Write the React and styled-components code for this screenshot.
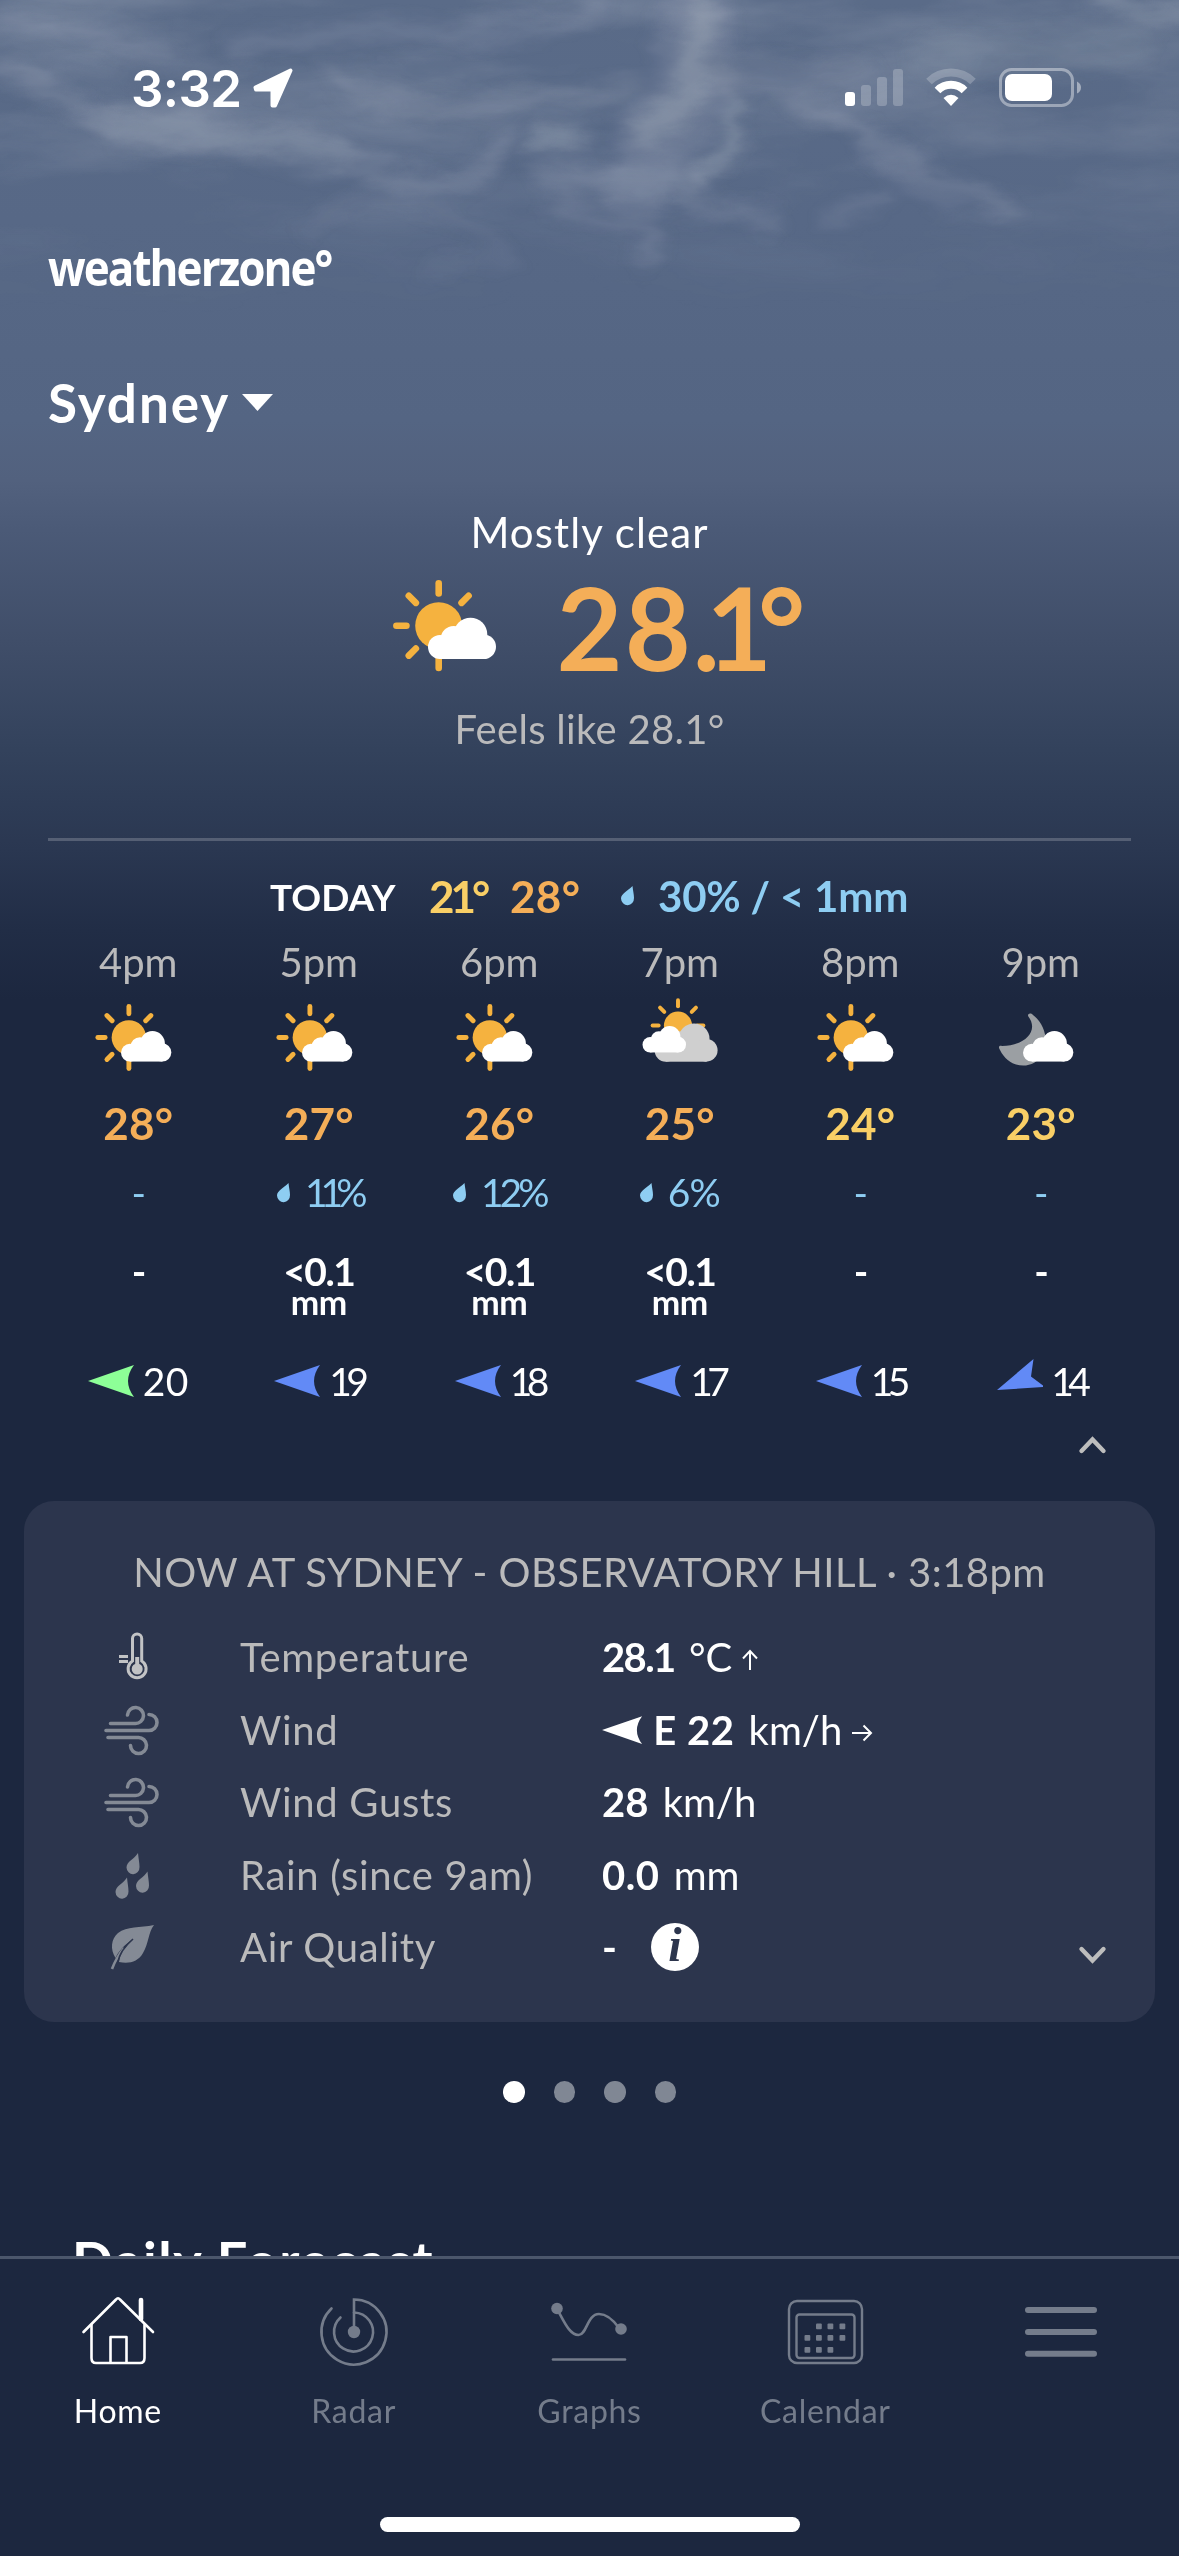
import React from "react"
import styled, { createGlobalStyle } from "styled-components"

const GlobalStyle = createGlobalStyle`
  * {
    box-sizing: border-box;
  }

  body {
    margin: 0;
    background: #1c273f;
    font-family: Lato, "Open Sans", sans-serif;
    color: #fff;
  }

  svg {
    display: block;
    flex: none;
    overflow: visible;
  }
`

const orange = "#f4ae58"
const yellow = "#f9cf66"
const rainBlue = "#8ecdf2"
const muted = "#bababb"
const inactive = "#747c8b"

const hours = [
  { time: "4pm", icon: "sun", temp: 28, color: orange, wind: "20", windColor: "#8dff97" },
  { time: "5pm", icon: "sun", temp: 27, color: orange, chance: "11%", wind: "19" },
  { time: "6pm", icon: "sun", temp: 26, color: orange, chance: "12%", wind: "18" },
  { time: "7pm", icon: "cloudy", temp: 25, color: orange, chance: "6%", wind: "17" },
  { time: "8pm", icon: "sun", temp: 24, color: yellow, wind: "15" },
  { time: "9pm", icon: "moon", temp: 23, color: yellow, wind: "14", tilted: true },
]

// Lato figures are all one width, so pull the text in round every "1"
const tighten = (text, amount) => -amount * (text.split("1").length - 1)

/* ---------- layout ---------- */

const Phone = styled.div`
  position: relative;
  width: 1179px;
  height: 2556px;
  overflow: hidden;
  background: linear-gradient(
    #5a6b88 0,
    #576886 220px,
    #546583 420px,
    #52617e 480px,
    #4b5a77 530px,
    #404e69 640px,
    #33425c 750px,
    #2a3751 850px,
    #212d46 930px,
    #1c273f 1000px
  );
`

const Sky = styled.svg`
  position: absolute;
  top: 0;
  left: 0;
`

const Screen = styled.main`
  position: relative;
  height: 2256px;
  overflow: hidden;
`

const StatusBar = styled.div`
  display: flex;
  align-items: center;
  height: 176px;
  padding: 0 98px 0 131px;
  font: 600 51px Inter, sans-serif;
`

const Clock = styled.span`
  letter-spacing: -0.6px;
  margin-right: 11px;
`

const StatusIcons = styled.div`
  display: flex;
  align-items: center;
  gap: 23px;
  margin-left: auto;
`

const Logo = styled.div`
  height: 186px;
  margin-left: 48px;
  font: 700 50px/182px "Open Sans", sans-serif;
  letter-spacing: -2.2px;
  transform: scaleX(0.88);
  transform-origin: left;
`

const Place = styled.div`
  display: flex;
  align-items: center;
  gap: 12px;
  height: 82px;
  padding: 0 0 2px 48px;
  font-size: 53px;
  font-weight: 700;
  letter-spacing: 2px;
`

const Current = styled.section`
  display: flex;
  flex-direction: column;
  align-items: center;
  margin: 58px 48px 0;
  padding-bottom: 79px;
  border-bottom: 3px solid rgba(255, 255, 255, 0.2);
`

const Condition = styled.div`
  height: 60px;
  line-height: 60px;
  font-size: 42px;
  letter-spacing: 1.1px;
`

const CurrentTemp = styled.div`
  display: flex;
  align-items: center;
  gap: 60px;
  height: 133px;
  padding: 0 0 5px 20px;
  color: ${orange};
  font-size: 114px;
  font-weight: 700;
  letter-spacing: 2px;
`

const Fraction = styled.span`
  letter-spacing: -14px;
`

const FeelsLike = styled.div`
  height: 60px;
  margin-top: 4px;
  line-height: 60px;
  font-size: 40px;
  letter-spacing: 0.3px;
  color: ${muted};
`

const Today = styled.div`
  display: flex;
  align-items: center;
  height: 84px;
  margin-top: 14px;
  padding: 0 0 2px 270px;
  font-size: 44px;
  font-weight: 700;
`

const TodayLabel = styled.span`
  width: 159px;
  font-size: 37px;
`

const TodayTemp = styled.span`
  width: ${(p) => p.$width}px;
  color: ${(p) => p.$color};
  letter-spacing: ${(p) => p.$spacing}px;
`

const TodayRain = styled.span`
  margin-left: 24px;
  font-size: 42px;
  color: ${rainBlue};
  letter-spacing: -0.2px;
`

const Hours = styled.section`
  display: grid;
  grid-template-columns: repeat(6, 1fr);
  padding: 0 48px;
`

const Hour = styled.div`
  display: flex;
  flex-direction: column;
`

const Cell = styled.div`
  display: flex;
  align-items: center;
  justify-content: center;
  gap: ${(p) => p.$gap || 0}px;
  height: ${(p) => p.$height}px;
  padding-bottom: 2px;
  color: ${(p) => p.$color || "#fff"};
  font-size: ${(p) => p.$size || 39}px;
  font-weight: ${(p) => p.$weight || 400};
  letter-spacing: ${(p) => p.$spacing || 0}px;
`

const Amount = styled.div`
  display: flex;
  flex-direction: column;
  align-items: center;
  height: 104px;
  padding-top: 23px;
  font-size: 39px;
  line-height: 44px;
  font-weight: 700;
  letter-spacing: -1.5px;
`

const AmountUnit = styled.span`
  font-size: 34px;
  line-height: 17px;
  letter-spacing: -0.5px;
`

const Collapse = styled.div`
  display: flex;
  justify-content: flex-end;
  align-items: center;
  height: 22px;
  padding-right: 73px;
`

const Card = styled.section`
  height: 521px;
  margin: 45px 24px 0;
  padding-top: 41px;
  border-radius: 30px;
  background: #2c354d;
`

const CardTitle = styled.div`
  height: 60px;
  margin-bottom: 19px;
  line-height: 60px;
  font-size: 40px;
  letter-spacing: 0.47px;
  text-align: center;
  color: ${muted};
`

const Observation = styled.div`
  display: grid;
  grid-template-columns: 216px 362px 1fr auto;
  align-items: center;
  height: 72.5px;
  padding-right: 49px;
  font-size: 40px;
`

const ObservationIcon = styled.span`
  display: flex;
  justify-content: center;
`

const ObservationLabel = styled.span`
  color: ${muted};
  letter-spacing: 0.7px;
`

const ObservationValue = styled.span`
  display: flex;
  align-items: center;
  white-space: pre;

  b {
    margin-right: 4px;
    font-weight: 700;
    letter-spacing: ${(p) => p.$spacing || 0}px;
  }
`

const Dots = styled.div`
  display: flex;
  justify-content: center;
  gap: 29px;
  margin-top: 59px;
`

const Dot = styled.span`
  width: 21.5px;
  height: 21.5px;
  border-radius: 50%;
  background: ${(p) => (p.$active ? "#fff" : "#808794")};
`

const Heading = styled.h2`
  margin: 128px 0 0 72px;
  font-size: 54px;
  line-height: 60px;
  font-weight: 700;
  letter-spacing: 1.6px;
`

const TabBar = styled.nav`
  position: relative;
  height: 300px;
  border-top: 3px solid #4b566b;
  background: #1c273f;
`

const Tabs = styled.div`
  display: grid;
  grid-template-columns: repeat(5, 1fr);
  height: 258px;
`

const Tab = styled.div`
  display: flex;
  flex-direction: column;
  align-items: center;
  padding-top: 32px;
  color: ${(p) => (p.$active ? "#fff" : inactive)};
  font-size: 32px;
  letter-spacing: 0.7px;

  span {
    margin-top: 15px;
    line-height: 50px;
  }
`

const HomeIndicator = styled.div`
  width: 420px;
  height: 15px;
  margin: 0 auto;
  border-radius: 8px;
  background: #fff;
`

/* ---------- icons ---------- */

function Clouds() {
  return (
    <Sky width="1179" height="420" viewBox="0 0 1179 420">
      <defs>
        <filter id="haze" x="0" y="0" width="100%" height="100%">
          <feTurbulence type="fractalNoise" baseFrequency="0.004 0.013" numOctaves="5" seed="11" />
          <feColorMatrix values="0 0 0 0 0.8  0 0 0 0 0.82  0 0 0 0 0.86  1.3 0 0 0 -0.5" />
        </filter>
        <filter id="wisp" x="-10%" y="-10%" width="120%" height="130%">
          <feTurbulence type="fractalNoise" baseFrequency="0.012 0.03" numOctaves="5" seed="4" result="n" />
          <feGaussianBlur in="SourceGraphic" stdDeviation="8" result="b" />
          <feDisplacementMap in="b" in2="n" scale="34" xChannelSelector="R" yChannelSelector="G" />
        </filter>
        <linearGradient id="fade" x2="0" y2="1">
          <stop offset="0" stopColor="#fff" />
          <stop offset="0.35" stopColor="#fff" stopOpacity="0.7" />
          <stop offset="0.75" stopColor="#fff" stopOpacity="0" />
        </linearGradient>
        <mask id="fadeMask">
          <rect width="1179" height="420" fill="url(#fade)" />
        </mask>
      </defs>
      <g mask="url(#fadeMask)">
        <rect width="1179" height="420" filter="url(#haze)" opacity="0.34" />
      </g>
      <g filter="url(#wisp)" fill="none" stroke="#c3c9d2" strokeLinecap="round">
        <path d="M0 20C80 30 140 40 170 55" strokeWidth="14" opacity="0.16" />
        <path d="M0 70C60 110 180 140 260 142S350 160 400 176 480 178 508 142" strokeWidth="18" opacity="0.2" />
        <path d="M120 125C190 130 250 140 330 154" strokeWidth="40" opacity="0.13" />
        <path d="M230 50C330 20 460 50 600 12" strokeWidth="20" opacity="0.16" />
        <path d="M330 75C400 118 500 108 630 88" strokeWidth="17" opacity="0.17" />
        <path d="M695 20C690 60 700 90 680 110S650 140 640 180" strokeWidth="74" opacity="0.14" />
        <path d="M700 10C690 30 700 60 690 85S665 110 648 135" strokeWidth="26" opacity="0.28" />
        <path d="M732 100C738 130 735 150 700 180" strokeWidth="16" opacity="0.28" />
        <path d="M545 142L572 140" strokeWidth="26" opacity="0.28" />
        <path d="M545 185C610 175 680 190 700 175" strokeWidth="28" opacity="0.18" />
        <path d="M560 205C610 222 640 226 662 242L640 262" strokeWidth="12" opacity="0.18" />
        <path d="M680 195C720 215 750 210 775 218" strokeWidth="15" opacity="0.18" />
        <path d="M720 70L860 75" strokeWidth="34" opacity="0.1" />
        <path d="M790 100C840 110 860 130 890 150S960 185 1010 210" strokeWidth="16" opacity="0.2" />
        <path d="M870 150C880 165 920 192 960 208" strokeWidth="12" opacity="0.14" />
        <path d="M930 60C1000 50 1060 60 1130 40" strokeWidth="44" opacity="0.08" />
        <path d="M1100 -6L1190 20" strokeWidth="16" opacity="0.28" />
        <path d="M300 235C330 190 420 190 480 232S500 260 430 266" strokeWidth="12" opacity="0.09" />
        <path d="M830 218L885 198" strokeWidth="12" opacity="0.18" />
      </g>
    </Sky>
  )
}

function LocationArrow() {
  return (
    <svg width="40" height="40" viewBox="0 0 40 40" fill="#fff" stroke="#fff" strokeWidth="4" strokeLinejoin="round">
      <path d="M37.5 2.5L22 37.5 19.5 37.5 19.5 21.5 3 21.5 2.5 19.5Z" />
    </svg>
  )
}

function Signal() {
  return (
    <svg width="58" height="38" viewBox="0 0 58 38" fill="#fff">
      <rect x="0" y="23" width="10" height="14" rx="3" />
      <g opacity="0.22">
        <rect x="16" y="16" width="10" height="21" rx="3" />
        <rect x="32" y="8" width="10" height="29" rx="3" />
        <rect x="48" y="0" width="10" height="37" rx="3" />
      </g>
    </svg>
  )
}

function Wifi() {
  return (
    <svg width="50" height="38" viewBox="0 0 50 38" fill="none" stroke="#fff">
      <path d="M3 12.5A31.5 31.5 0 0 1 47 12.5" strokeWidth="8" opacity="0.22" />
      <path d="M11.5 21.5A19 19 0 0 1 38.5 21.5" strokeWidth="8" />
      <path d="M25 37L17.5 29Q25 22.5 32.5 29Z" fill="#fff" stroke="none" />
    </svg>
  )
}

function Battery() {
  return (
    <svg width="82" height="40" viewBox="0 0 82 40" fill="#fff">
      <rect x="1.5" y="1.5" width="72" height="36" rx="11" fill="none" stroke="#fff" strokeWidth="3" opacity="0.4" />
      <rect x="6" y="6" width="47" height="27" rx="7" />
      <path d="M78 13.5Q82 15.5 82 19.5T78 25.5Z" opacity="0.45" />
    </svg>
  )
}

function Cloud({ x, y, scale, fill = "#fff" }) {
  return (
    <g transform={`translate(${x} ${y}) scale(${scale})`} fill={fill}>
      <circle cx="12" cy="29.3" r="12" />
      <circle cx="25.7" cy="21.3" r="13" />
      <circle cx="42.5" cy="16.8" r="16.8" />
      <circle cx="55.7" cy="29" r="12.3" />
      <rect x="12" y="21" width="44" height="20.3" />
    </g>
  )
}

function Sun({ x, y, scale, rays }) {
  return (
    <g transform={`translate(${x} ${y}) scale(${scale})`}>
      <circle r="23.5" fill="#f5b23f" />
      {rays.map((angle) => (
        <path
          key={angle}
          d="M0 -32.3V-42.3"
          transform={`rotate(${angle})`}
          stroke="#f5b23f"
          strokeWidth="6.6"
          strokeLinecap="round"
        />
      ))}
    </g>
  )
}

const sideRays = [45, 0, -45, -90, -135, 180]

function MostlySunny() {
  return (
    <svg width="105" height="92" viewBox="0 0 105 92">
      <Sun x={46.7} y={45.7} scale={1} rays={sideRays} />
      <Cloud x={36} y={37.7} scale={1} />
    </svg>
  )
}

function HourIcon({ name }) {
  return (
    <svg width="88" height="72" viewBox="0 0 88 72">
      {name === "sun" && (
        <>
          <Sun x={34.9} y={37.5} scale={0.735} rays={sideRays} />
          <Cloud x={27} y={31} scale={0.74} />
        </>
      )}
      {name === "cloudy" && (
        <>
          <Sun x={42} y={25.6} scale={0.6} rays={[90, 45, 0, -45, -90]} />
          <Cloud x={18.7} y={23.5} scale={0.925} fill="#cfcfcf" />
          <Cloud x={6.5} y={26} scale={0.64} />
        </>
      )}
      {name === "moon" && (
        <>
          <path
            d="M31 16C31 13 34 13 36 15C48 24 52 41 46 54C36 71 12 69 3 50C1 47 2 45 5 46C27 46 43 31 31 16Z"
            fill="#9b9fa3"
          />
          <Cloud x={26} y={31} scale={0.74} />
        </>
      )}
    </svg>
  )
}

function Drop({ size = 19 }) {
  return (
    <svg width={(size * 13) / 19} height={size} viewBox="0 0 13 19">
      <path d="M11.5 0C12 5 13 8.5 13 12A6.4 6.8 0 0 1 0 12.5C0 7.5 7 5 11.5 0Z" fill="currentColor" />
    </svg>
  )
}

function WindArrow({ color = "#628af6", tilted, width = 47 }) {
  return (
    <svg width={width} height={(width * 30) / 47} viewBox="0 0 47 30">
      <path d={tilted ? "M1 24L37.5 -7 35 10.5 47 19.5V21Z" : "M0 15L46 -1Q34 15 46 31Z"} fill={color} />
    </svg>
  )
}

function Chevron({ up }) {
  return (
    <svg width="27" height="17" viewBox="0 0 27 17">
      <path
        d={up ? "M2.5 14L13.5 2.5 24.5 14" : "M2.5 10L13.5 21.5 24.5 10"}
        fill="none"
        stroke="#bdbdbd"
        strokeWidth="4.4"
        strokeLinecap="round"
      />
    </svg>
  )
}

function Thermometer() {
  return (
    <svg width="34" height="50" viewBox="0 0 34 50" fill="none" stroke="#c2c3c5">
      <path d="M17.5 29V6.5A4.6 4.6 0 0 1 26.7 6.5V29A9 9 0 1 1 17.5 29Z" strokeWidth="3" />
      <circle cx="22.2" cy="37" r="5.5" fill="#c2c3c5" stroke="none" />
      <path d="M22.2 38V25" strokeWidth="4" />
      <path d="M4 24.5H13M4 29.5H13" strokeWidth="3.2" />
    </svg>
  )
}

function WindLines() {
  return (
    <svg width="54" height="48" viewBox="0 0 54 48" fill="none" stroke="#848a95" strokeWidth="3.6" strokeLinecap="round">
      <path d="M5.5 17.5H30A8 8 0 1 0 22.5 9" />
      <path d="M1 24.5H44A8 8 0 1 0 44 8.5" />
      <path d="M3 31.5H33A8 8 0 1 1 25.5 39.5" />
    </svg>
  )
}

function RainDrops() {
  const drop = "M11.5 0C12 6 13 9.5 13 14A6.4 6.8 0 0 1 0 14.5C0 8.5 8 6 11.5 0Z"
  return (
    <svg width="36" height="48" viewBox="0 0 36 48" fill="#848a95">
      <path d={drop} transform="translate(12.5 2)" />
      <path d={drop} transform="translate(22 20.5)" />
      <path d={drop} transform="translate(1.5 26.5)" />
    </svg>
  )
}

function Leaf() {
  return (
    <svg width="44" height="48" viewBox="0 0 44 48" fill="#848a95">
      <path d="M44 2C38 10 39 20 33 30C28 39 19 41 9 39C10 31 15 24 23 16C14 22 8 29 5.5 35C0 26 1 16 8 10C17 3 30 5 44 2Z" />
      <path d="M14 25C9 31 5 38 2 46" stroke="#848a95" strokeWidth="2.6" fill="none" />
      <path d="M23 16C14 24 9 31 8 39" stroke="#2c354d" strokeWidth="1.6" fill="none" />
    </svg>
  )
}

function SmallArrow({ right }) {
  return (
    <svg width={right ? 20 : 16} height="20" viewBox={right ? "0 0 20 20" : "0 0 16 20"} fill="none" stroke="#fff" strokeWidth="2">
      <path d={right ? "M0 13H18.5M11.5 5.5L19 13 11.5 20.5" : "M8 23V4M1 11.5L8 4 15 11.5"} />
    </svg>
  )
}

const InfoBadge = styled.i`
  width: 48px;
  height: 48px;
  margin-left: 30px;
  border-radius: 50%;
  background: #fff;
  color: #2c354d;
  font: italic 700 48px/44px "Liberation Serif", serif;
  text-align: center;
`

function HomeIcon() {
  return (
    <svg width="80" height="80" viewBox="0 0 80 80" fill="none" stroke="#fff" strokeWidth="2.6" strokeLinecap="round" strokeLinejoin="round">
      <path d="M5.5 41L38 8.5Q40 6 42 8.5L75 41" />
      <path d="M13.5 34V67Q13.5 72 18 72H62Q66.5 72 66.5 67V34" />
      <path d="M32.5 71V46H48.5V71" />
      <path d="M63 9V28" strokeWidth="4.6" />
    </svg>
  )
}

function RadarIcon() {
  return (
    <svg width="80" height="80" viewBox="0 0 80 80" fill="none" stroke={inactive} strokeWidth="2.6" strokeLinecap="round">
      <path d="M40 41V8.5A32.5 32.5 0 1 1 17.5 17.5" />
      <path d="M40 21.5A19.5 19.5 0 1 1 26.5 26.5" />
      <circle cx="40" cy="41" r="6.2" fill={inactive} stroke="none" />
    </svg>
  )
}

function GraphIcon() {
  return (
    <svg width="80" height="80" viewBox="0 0 80 80" fill="none" stroke={inactive} strokeWidth="2.6" strokeLinecap="round">
      <path d="M8 18C14 28 20 44 29.500 44C38 44 38 23 50 23C58 23 65 30 70 37" />
      <circle cx="8" cy="17.5" r="5.8" fill={inactive} stroke="none" />
      <circle cx="72" cy="38" r="5.8" fill={inactive} stroke="none" />
      <path d="M4 68.5H76" />
    </svg>
  )
}

function CalendarIcon() {
  const days = [
    [31, 34], [42.5, 34], [54.5, 34],
    [19.5, 45.5], [31, 45.5], [42.5, 45.5], [54.5, 45.5],
    [19.5, 57.5], [31, 57.5], [42.5, 57.5],
  ]
  return (
    <svg width="80" height="80" viewBox="0 0 80 80" fill="none" stroke={inactive} strokeWidth="2.4">
      <rect x="4" y="10" width="73" height="62" rx="8" />
      <rect x="11.5" y="23.5" width="58" height="43.5" rx="3" />
      {days.map(([x, y]) => (
        <rect key={`${x}-${y}`} x={x} y={y - 1.5} width="5.8" height="5.8" rx="1" fill={inactive} stroke="none" />
      ))}
    </svg>
  )
}

function MenuIcon() {
  return (
    <svg width="80" height="80" viewBox="0 0 80 80" stroke={inactive} strokeWidth="6" strokeLinecap="round">
      <path d="M7 19H73M7 41H73M7 62.7H73" />
    </svg>
  )
}

/* ---------- screen ---------- */

function HourColumn({ hour }) {
  return (
    <Hour>
      <Cell $height={47} $color={muted} $size={40}>
        {hour.time}
      </Cell>
      <Cell $height={102}>
        <HourIcon name={hour.icon} />
      </Cell>
      <Cell $height={72} $size={44} $weight={700} $color={hour.color} $spacing={0.3}>
        {hour.temp}°
      </Cell>
      <Cell $height={66} $color={rainBlue} $gap={15} $spacing={tighten(hour.chance || "", 3) - 1}>
        {hour.chance && <Drop />}
        {hour.chance || "-"}
      </Cell>
      <Amount>
        {hour.chance ? "<0.1" : "-"}
        {hour.chance && <AmountUnit>mm</AmountUnit>}
      </Amount>
      <Cell $height={104} $gap={8} $spacing={tighten(hour.wind, 6) + 0.5}>
        <WindArrow color={hour.windColor} tilted={hour.tilted} />
        {hour.wind}
      </Cell>
    </Hour>
  )
}

function Observations() {
  return (
    <Card>
      <CardTitle>NOW AT SYDNEY - OBSERVATORY HILL · 3:18pm</CardTitle>
      <Observation>
        <ObservationIcon><Thermometer /></ObservationIcon>
        <ObservationLabel>Temperature</ObservationLabel>
        <ObservationValue $spacing={-1.6}>
          <b>28.1</b> °C <SmallArrow />
        </ObservationValue>
      </Observation>
      <Observation>
        <ObservationIcon><WindLines /></ObservationIcon>
        <ObservationLabel>Wind</ObservationLabel>
        <ObservationValue $spacing={0.5}>
          <WindArrow color="#fff" width={41} />
          <b> E 22</b> km/h <SmallArrow right />
        </ObservationValue>
      </Observation>
      <Observation>
        <ObservationIcon><WindLines /></ObservationIcon>
        <ObservationLabel>Wind Gusts</ObservationLabel>
        <ObservationValue>
          <b>28</b> km/h
        </ObservationValue>
      </Observation>
      <Observation>
        <ObservationIcon><RainDrops /></ObservationIcon>
        <ObservationLabel>Rain (since 9am)</ObservationLabel>
        <ObservationValue $spacing={0.5}>
          <b>0.0</b> mm
        </ObservationValue>
      </Observation>
      <Observation>
        <ObservationIcon><Leaf /></ObservationIcon>
        <ObservationLabel>Air Quality</ObservationLabel>
        <ObservationValue>
          <b>-</b>
          <InfoBadge>i</InfoBadge>
        </ObservationValue>
        <Chevron />
      </Observation>
    </Card>
  )
}

function App() {
  return (
    <>
      <GlobalStyle />
      <Phone>
        <Clouds />
        <Screen>
          <StatusBar>
            <Clock>3:32</Clock>
            <LocationArrow />
            <StatusIcons>
              <Signal />
              <Wifi />
              <Battery />
            </StatusIcons>
          </StatusBar>
          <Logo>weatherzone°</Logo>
          <Place>
            Sydney
            <svg width="31" height="18" viewBox="0 0 31 18">
              <path d="M0 1H31L15.5 18Z" fill="#fff" />
            </svg>
          </Place>
          <Current>
            <Condition>Mostly clear</Condition>
            <CurrentTemp>
              <MostlySunny />
              <span>
                28<Fraction>.1</Fraction>°
              </span>
            </CurrentTemp>
            <FeelsLike>Feels like 28.1°</FeelsLike>
          </Current>
          <Today>
            <TodayLabel>TODAY</TodayLabel>
            <TodayTemp $color={yellow} $width={81} $spacing={-4}>21°</TodayTemp>
            <TodayTemp $color={orange} $width={111} $spacing={0.3}>28°</TodayTemp>
            <Cell $color={rainBlue} $height={40}>
              <Drop />
            </Cell>
            <TodayRain>30% / &lt; 1mm</TodayRain>
          </Today>
          <Hours>
            {hours.map((hour) => (
              <HourColumn key={hour.time} hour={hour} />
            ))}
          </Hours>
          <Collapse>
            <Chevron up />
          </Collapse>
          <Observations />
          <Dots>
            <Dot $active />
            <Dot />
            <Dot />
            <Dot />
          </Dots>
          <Heading>Daily Forecast</Heading>
        </Screen>
        <TabBar>
          <Tabs>
            <Tab $active>
              <HomeIcon />
              <span>Home</span>
            </Tab>
            <Tab>
              <RadarIcon />
              <span>Radar</span>
            </Tab>
            <Tab>
              <GraphIcon />
              <span>Graphs</span>
            </Tab>
            <Tab>
              <CalendarIcon />
              <span>Calendar</span>
            </Tab>
            <Tab>
              <MenuIcon />
            </Tab>
          </Tabs>
          <HomeIndicator />
        </TabBar>
      </Phone>
    </>
  )
}

export default App
